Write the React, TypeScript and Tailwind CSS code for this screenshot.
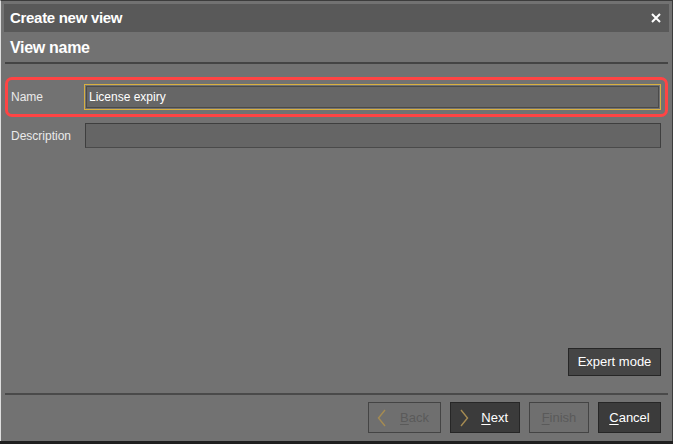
import React from 'react';

const font = { fontFamily: '"Liberation Sans", Arial, sans-serif' };

const WizardButton = ({
  hotkey,
  rest,
  icon,
  disabled,
  className,
}: {
  hotkey: string;
  rest: string;
  icon?: 'back' | 'next';
  disabled?: boolean;
  className: string;
}) => (
  <button
    className={`h-[31px] flex items-center border text-[13px] ${
      disabled
        ? 'bg-[#6f6f6f] border-[#444] text-[#5a5a5a]'
        : 'bg-[#3b3b3b] border-[#262626] text-white'
    } ${className}`}
  >
    {icon && (
      <svg width="10" height="18" viewBox="0 0 10 18" className="ml-[8px]">
        <path
          d={icon === 'back' ? 'M8 1L1.5 9L8 17' : 'M2 1L8.5 9L2 17'}
          fill="none"
          stroke="#a58b52"
          strokeWidth="1.4"
        />
      </svg>
    )}
    <span className={`${icon ? 'ml-auto mr-[11px]' : 'mx-auto'}`}>
      <span className="underline underline-offset-2">{hotkey}</span>
      {rest}
    </span>
  </button>
);

export default function App() {
  return (
    <div style={font} className="w-[673px] h-[444px] bg-[#1f1f1f] pb-[3px]">
      <div className="h-full flex flex-col bg-[#727272] border border-[#3c3c3c] border-l-[#dedede] border-b-0">
        {/* Title bar */}
        <div className="mt-[3px] mx-[3px] h-[28px] bg-[#595959] flex items-center justify-between px-[6px]">
          <span className="text-white font-bold text-[15px] tracking-[-0.3px]">Create new view</span>
          <svg width="10" height="10" viewBox="0 0 10 10" className="mr-[2px]">
            <path d="M1 1L9 9M9 1L1 9" stroke="white" strokeWidth="2" />
          </svg>
        </div>

        {/* Header */}
        <div className="mx-[4px] px-[5px] pt-[4px] pb-[2px] border-b-2 border-[#444] text-white font-bold text-[16px] tracking-[-0.3px]">
          View name
        </div>

        {/* Form */}
        <div className="mt-[13px] px-[4px]">
          <div className="h-[40px] rounded-[7px] border-[3px] border-[#ff4444] flex items-center pl-[3px] pr-[4px]">
            <span className="w-[73px] text-[12px] text-[#eaeaea]">Name</span>
            <div className="flex-1 h-[26px] border border-[#d8b040] p-px">
              <div className="h-full bg-[#666] border border-[#4a4a4a] flex items-center px-[2px] text-[12px] text-white">
                License expiry
              </div>
            </div>
          </div>
          <div className="mt-[6px] flex items-center pl-[6px] pr-[7px]">
            <span className="w-[74px] text-[12px] text-[#eaeaea]">Description</span>
            <div className="flex-1 h-[25px] bg-[#656565] border border-[#3e3e3e] border-b-[#4a4a4a]" />
          </div>
        </div>

        <div className="flex-1" />

        {/* Expert mode */}
        <div className="flex justify-end pr-[11px] pb-[17px]">
          <button className="w-[93px] h-[28px] bg-[#454545] border border-[#262626] text-white text-[13px]">
            Expert mode
          </button>
        </div>

        {/* Footer */}
        <div className="mx-[4px] border-t-2 border-[#4a4a4a] flex justify-end gap-[9px] pt-[7px] pb-[8px] pr-[7px]">
          <WizardButton icon="back" hotkey="B" rest="ack" disabled className="w-[73px]" />
          <WizardButton icon="next" hotkey="N" rest="ext" className="w-[70px]" />
          <WizardButton hotkey="F" rest="inish" disabled className="w-[60px]" />
          <WizardButton hotkey="C" rest="ancel" className="w-[63px]" />
        </div>
      </div>
    </div>
  );
}
